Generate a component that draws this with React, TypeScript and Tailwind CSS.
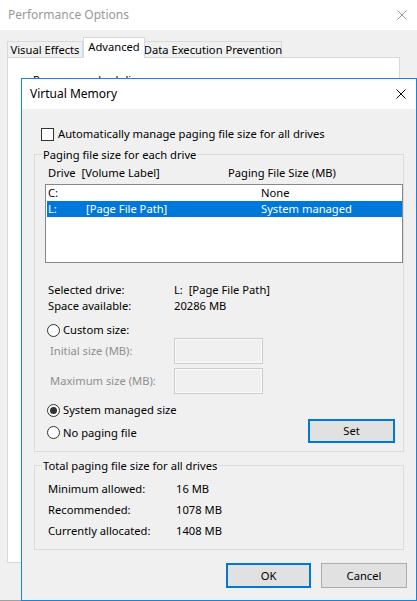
import React from "react";

function CloseIcon({ color }: { color: string }) {
  return (
    <svg width="10" height="10" viewBox="0 0 10 10" className="block">
      <path d="M0.5 0.5 L9.5 9.5 M9.5 0.5 L0.5 9.5" stroke={color} strokeWidth="1" fill="none" />
    </svg>
  );
}

function Radio({ checked }: { checked?: boolean }) {
  return (
    <span className="flex h-[13px] w-[13px] shrink-0 items-center justify-center rounded-full border border-[#333333] bg-white">
      {checked && <span className="h-[7px] w-[7px] rounded-full bg-[#333333]" />}
    </span>
  );
}

function Group({ title, children }: { title: string; children: React.ReactNode }) {
  return (
    <div className="border border-[#dcdcdc]">
      <div className="-mt-[8px] ml-[7px] w-fit bg-[#f0f0f0] px-[1px] leading-[16px]">{title}</div>
      {children}
    </div>
  );
}

function SizeInput({ label }: { label: string }) {
  return (
    <div className="flex h-[26px] items-center pl-[15px]">
      <span className="w-[124px] text-[#8f8f8f]">{label}</span>
      <span className="h-[26px] w-[89px] border border-[#cccccc] bg-[#f0f0f0] shadow-[inset_0_0_0_1px_#fafafa]" />
    </div>
  );
}

export default function App() {
  const totals = [
    { label: "Minimum allowed:", value: "16 MB" },
    { label: "Recommended:", value: "1078 MB" },
    { label: "Currently allocated:", value: "1408 MB" },
  ];

  return (
    <div
      className="relative h-[601px] w-[417px] overflow-hidden bg-[#f0f0f0] text-[11.2px] leading-[16px] text-black"
      style={{ fontFamily: '"Noto Sans", "Open Sans", sans-serif' }}
    >
      {/* Performance Options (inactive, behind) */}
      <div className="flex h-[601px] flex-col border-b border-[#a0a0a0]">
        <div className="flex h-[30px] items-center justify-between bg-white pl-[8px] pr-[10px] text-[12px] text-[#999999]">
          <span>Performance Options</span>
          <CloseIcon color="#999999" />
        </div>
        <div className="px-[7px]">
          <div className="flex h-[27px] items-end whitespace-nowrap">
            <div className="-mb-[1px] flex h-[17px] w-[76px] items-center justify-center border border-b-0 border-[#d9d9d9]">
              Visual Effects
            </div>
            <div className="z-10 -mb-[1px] flex h-[21px] w-[62px] items-start justify-center border border-b-0 border-[#d9d9d9] bg-white pt-[1px]">
              Advanced
            </div>
            <div className="-mb-[1px] flex h-[17px] w-[137px] items-center justify-center border border-b-0 border-l-0 border-[#d9d9d9]">
              Data Execution Prevention
            </div>
          </div>
          <div className="h-[506px] w-[393px] border border-[#d9d9d9] bg-white pl-[25px] pt-[14px]">
            Processor scheduling
          </div>
        </div>
      </div>

      {/* Virtual Memory dialog */}
      <div className="absolute left-[21px] top-[78px] flex h-[523px] w-[396px] flex-col border border-[#1883d7] bg-[#f0f0f0]">
        <div className="flex h-[30px] items-center justify-between bg-white pl-[8px] pr-[10px] text-[12px]">
          <span>Virtual Memory</span>
          <CloseIcon color="#000000" />
        </div>

        <div className="px-[12px]">
          <div className="ml-[7px] mt-[17px] flex h-[16px] items-center gap-[4px]">
            <span className="h-[13px] w-[13px] border border-[#333333] bg-white" />
            <span>Automatically manage paging file size for all drives</span>
          </div>

          <div className="mt-[12px]">
            <Group title="Paging file size for each drive">
              <div className="mt-[2px] flex pl-[13px]">
                <span className="w-[180px] whitespace-pre">Drive  [Volume Label]</span>
                <span>Paging File Size (MB)</span>
              </div>
              <div className="ml-[10px] mt-[3px] h-[79px] border border-[#828790] bg-white">
                <div className="flex h-[16px] items-center pl-[2px]">
                  <span className="w-[213px]">C:</span>
                  <span>None</span>
                </div>
                <div className="ml-[1px] flex h-[16px] items-center bg-[#0078d7] pl-[1px] text-white">
                  <span className="w-[38px]">L:</span>
                  <span className="w-[175px]">[Page File Path]</span>
                  <span>System managed</span>
                </div>
              </div>

              <div className="mt-[19px] pl-[13px]">
                <div className="flex">
                  <span className="w-[126px]">Selected drive:</span>
                  <span className="whitespace-pre">L:  [Page File Path]</span>
                </div>
                <div className="flex">
                  <span className="w-[126px]">Space available:</span>
                  <span>20286 MB</span>
                </div>
              </div>

              <div className="mt-[8px] flex h-[16px] items-center gap-[3px] pl-[12px]">
                <Radio />
                <span>Custom size:</span>
              </div>
              <SizeInput label="Initial size (MB):" />
              <div className="mt-[4px]">
                <SizeInput label="Maximum size (MB):" />
              </div>

              <div className="mt-[8px] flex h-[16px] items-center gap-[3px] pl-[12px]">
                <Radio checked />
                <span>System managed size</span>
              </div>
              <div className="mb-[8px] mt-[1px] flex h-[24px] items-center justify-between pl-[12px] pr-[8px]">
                <div className="mt-[3px] flex items-center gap-[3px]">
                  <Radio />
                  <span>No paging file</span>
                </div>
                <button className="h-[24px] w-[87px] border-2 border-[#0078d7] bg-[#e1e1e1]">Set</button>
              </div>
            </Group>
          </div>

          <div className="mt-[13px]">
            <Group title="Total paging file size for all drives">
              <div className="mt-[4px] pb-[8px] pl-[13px]">
                {totals.map((t) => (
                  <div key={t.label} className="flex h-[21px] items-center">
                    <span className="w-[128px]">{t.label}</span>
                    <span>{t.value}</span>
                  </div>
                ))}
              </div>
            </Group>
          </div>

          <div className="mt-[13px] flex justify-end gap-[10px]">
            <button className="h-[25px] w-[85px] border-2 border-[#0078d7] bg-[#e1e1e1]">OK</button>
            <button className="mr-[-3px] h-[25px] w-[86px] border border-[#adadad] bg-[#e1e1e1]">Cancel</button>
          </div>
        </div>
      </div>
    </div>
  );
}
